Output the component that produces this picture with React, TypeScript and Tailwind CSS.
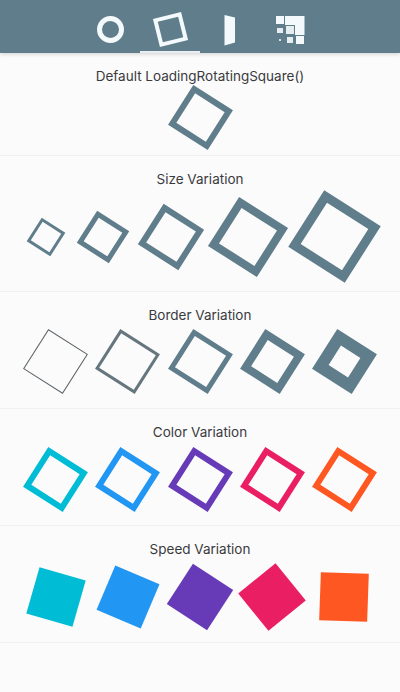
import React from 'react';

const COLORS = ['#00BCD4', '#2196F3', '#673AB7', '#E91E63', '#FF5722'];

// Rotation is per-instance, it's what the frame of the animation looks like
function Square({
  size,
  border,
  color = '#607D8B',
  angle = 32.5,
  filled = false,
}: {
  size: number;
  border?: number;
  color?: string;
  angle?: number;
  filled?: boolean;
}) {
  return (
    <div
      className="shrink-0 box-border"
      style={{
        width: size,
        height: size,
        transform: `rotate(${angle}deg)`,
        borderStyle: 'solid',
        borderWidth: border ?? 0,
        borderColor: color,
        backgroundColor: filled ? color : 'transparent',
      }}
    />
  );
}

function Section({ title, height, children }: { title: string; height: string; children: React.ReactNode }) {
  return (
    <div className={`flex flex-col border-b border-[#f1f1f2] ${height}`}>
      <p className="mt-[14px] h-[18px] text-center text-[13.5px] leading-[18px] text-[#3a3a3c]">
        {title}
      </p>
      {children}
    </div>
  );
}

function TabIcons() {
  return (
    <div className="relative z-10 flex h-[53px] items-center justify-center bg-[#607D8B] shadow-[0_1px_4px_rgba(0,0,0,0.18)]">
      <div className="relative flex h-full w-[60px] items-center justify-center pt-[6px]">
        <div className="h-[27px] w-[27px] rounded-full border-[5px] border-[#f4f9fb]" />
      </div>
      <div className="relative flex h-full w-[60px] items-center justify-center pt-[6px]">
        <div className="h-[29px] w-[29px] -rotate-[14deg] border-[4px] border-[#f4f9fb]" />
        <div className="absolute bottom-0 left-0 h-[2px] w-[60px] bg-[#e8eef1]" />
      </div>
      <div className="flex h-full w-[60px] items-center justify-center pt-[6px]">
        <svg width="12" height="32" viewBox="0 0 12 32">
          <polygon points="0.5,1 11,3.5 11,28.5 0.5,31.5" fill="#f4f9fb" />
        </svg>
      </div>
      <div className="flex h-full w-[60px] items-center justify-center pt-[6px]">
        <svg width="30" height="30" viewBox="0 0 30 30" fill="#f4f9fb">
          <rect x="1" y="1" width="8" height="8" />
          <polygon points="10,1 29.5,1 29.5,20 20,20 20,10 10,10" />
          <rect x="11" y="11" width="8" height="8" opacity="0.9" />
          <rect x="2" y="13" width="6" height="5" opacity="0.9" />
          <rect x="4" y="24" width="2" height="2" opacity="0.8" />
          <rect x="12" y="22" width="6" height="6" opacity="0.9" />
          <rect x="21" y="21" width="8" height="8" />
        </svg>
      </div>
    </div>
  );
}

export default function App() {
  return (
    <div className="h-[692px] w-[400px] overflow-hidden bg-[#fbfbfc] font-['Inter',sans-serif]">
      <TabIcons />

      <Section title="Default LoadingRotatingSquare()" height="h-[103px]">
        <div className="mt-[9px] flex justify-center">
          <Square size={47} border={6} />
        </div>
      </Section>

      <Section title="Size Variation" height="h-[136px]">
        <div className="mt-[15px] flex items-center justify-between px-[32px]">
          <Square size={28} border={3} />
          <Square size={38} border={5} />
          <Square size={48} border={6} />
          <Square size={58} border={8} />
          <Square size={67} border={9} />
        </div>
      </Section>

      <Section title="Border Variation" height="h-[117px]">
        <div className="mt-[14px] flex items-center justify-between px-[32px]">
          <Square size={47} border={1} color="#5c6468" />
          <Square size={47} border={3} color="#66767f" />
          <Square size={47} border={5} />
          <Square size={47} border={8} />
          <Square size={47} border={12} />
        </div>
      </Section>

      <Section title="Color Variation" height="h-[117px]">
        <div className="mt-[15px] flex items-center justify-between px-[32px]">
          {COLORS.map((c) => (
            <Square key={c} size={47} border={6} color={c} />
          ))}
        </div>
      </Section>

      <Section title="Speed Variation" height="h-[117px]">
        <div className="mt-[15px] flex items-center justify-between px-[32px]">
          {COLORS.map((c, i) => (
            <Square key={c} size={48} color={c} filled angle={[16, 23, 33, 51, 2][i]} />
          ))}
        </div>
      </Section>
    </div>
  );
}
